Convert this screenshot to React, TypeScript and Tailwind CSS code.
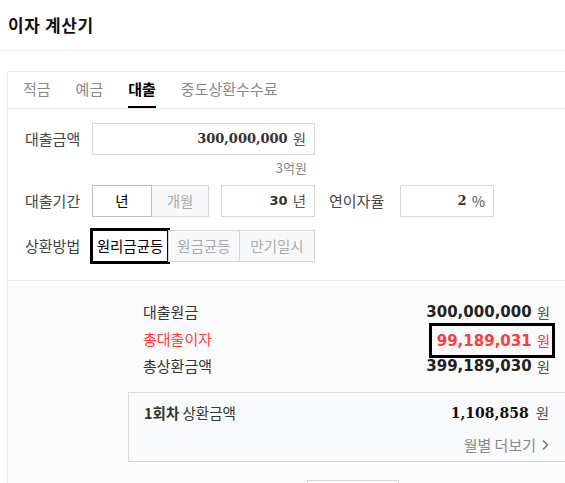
import type { ReactNode } from 'react'

const KR = "font-['Noto_Sans_CJK_KR','Noto_Sans',sans-serif]"
const SERIF_NUM = "font-['DejaVu_Serif','Noto_Sans_CJK_KR',serif]"
const SANS_NUM = "font-['DejaVu_Sans','Noto_Sans_CJK_KR',sans-serif]"

const TABS = ['적금', '예금', '대출', '중도상환수수료']

function NumberBox({ value, unit, width, numFont }: { value: string; unit: string; width: string; numFont: string }) {
  return (
    <div className={`${width} h-8 border border-[#d6d6d6] bg-white flex items-center justify-end pr-2 gap-[5px]`}>
      <span className={`${numFont} font-bold text-[13px] text-[#333]`}>{value}</span>
      <span className="text-[14.5px] text-[#555]">{unit}</span>
    </div>
  )
}

function ResultRow({ label, value, red, boxed }: { label: string; value: string; red?: boolean; boxed?: boolean }) {
  return (
    <div className="flex items-center justify-between h-[27px]">
      <span className={`text-[15px] ${red ? 'text-[#ff3b3b]' : 'text-[#333]'}`}>{label}</span>
      <span
        className={`flex items-center gap-[5px] ${boxed ? 'outline-[3px] outline outline-black outline-offset-[2px] pl-[3px] pt-[2px] pb-[1px] translate-y-[1px]' : ''}`}
      >
        <span className={`${SANS_NUM} font-bold text-[15px] ${red ? 'text-[#ff3b3b]' : 'text-[#222]'}`}>{value}</span>
        <span className={`text-[14.5px] ${red ? 'text-[#ff3b3b]' : 'text-[#555]'}`}>원</span>
      </span>
    </div>
  )
}

function Row({ label, children, className = '' }: { label: string; children: ReactNode; className?: string }) {
  return (
    <div className={`flex items-center ${className}`}>
      <span className="w-[67px] text-[15px] text-[#444]">{label}</span>
      {children}
    </div>
  )
}

export default function App() {
  return (
    <div className={`${KR} w-[565px] h-[483px] overflow-hidden bg-white`}>
      {/* Header */}
      <div className="h-[51px] border-b border-[#eeeeee] flex items-center pl-2">
        <h1 className="text-[17px] font-bold text-[#111] tracking-[0.6px]">이자 계산기</h1>
      </div>

      {/* Panel */}
      <div className="mt-5 ml-[7px] mr-[-30px] border border-[#ebebeb]">
        {/* Tabs */}
        <div className="h-[37px] border-b border-[#ebebeb] flex pl-[15px] gap-[25px]">
          {TABS.map((tab) => {
            const active = tab === '대출'
            return (
              <div
                key={tab}
                className={`h-full flex items-center text-[15px] border-b-2 ${
                  active ? 'text-black font-bold border-black' : 'text-[#888] border-transparent'
                }`}
              >
                {tab}
              </div>
            )
          })}
        </div>

        {/* Form */}
        <div className="pl-[17px] pt-[14px] pb-[18px] border-b border-[#ebebeb]">
          <Row label="대출금액">
            <NumberBox value="300,000,000" unit="원" width="w-[223px]" numFont={SERIF_NUM} />
          </Row>
          <div className="w-[282px] text-right text-[13px] text-[#888] h-[30px] leading-[26px]">3억원</div>

          <Row label="대출기간">
            <div className="flex h-8">
              <div className="w-[60px] border border-[#bdbdbd] bg-white flex items-center justify-center text-[14.5px] text-black">
                년
              </div>
              <div className="w-[57px] border border-l-0 border-[#d6d6d6] bg-[#f7f8fa] flex items-center justify-center text-[14.5px] text-[#aaa]">
                개월
              </div>
            </div>
            <div className="ml-3">
              <NumberBox value="30" unit="년" width="w-[94px]" numFont={SANS_NUM} />
            </div>
            <span className="ml-[14px] w-[71px] text-[15px] text-[#444]">연이자율</span>
            <NumberBox value="2" unit="%" width="w-[94px]" numFont={SERIF_NUM} />
          </Row>

          <Row label="상환방법" className="mt-[13px]">
            <div className="flex h-8">
              <div className="w-[76px] border-b border-[#bdbdbd] bg-white flex items-center justify-center text-[14.5px] text-black outline outline-[3px] outline-black outline-offset-[-1px]">
                원리금균등
              </div>
              <div className="w-[72px] border border-[#d6d6d6] bg-[#f7f8fa] flex items-center justify-center text-[14.5px] text-[#aaa]">
                원금균등
              </div>
              <div className="w-[75px] border border-l-0 border-[#d6d6d6] bg-[#f7f8fa] flex items-center justify-center text-[14.5px] text-[#aaa]">
                만기일시
              </div>
            </div>
          </Row>
        </div>

        {/* Results */}
        <div className="bg-[#fbfbfb] pt-[18px] pl-[135px] pr-[44px] pb-10">
          <ResultRow label="대출원금" value="300,000,000" />
          <ResultRow label="총대출이자" value="99,189,031" red boxed />
          <ResultRow label="총상환금액" value="399,189,030" />

          <div className="mt-[12px] ml-[-15px] mr-[-30px] pl-[15px] pr-[30px] h-[70px] border border-[#d9d9d9] bg-[#f9fafb] pt-[8px]">
            <div className="flex items-center justify-between h-6">
              <span className="text-[14.5px] text-[#333]">
                <span className="font-bold">1회차</span> 상환금액
              </span>
              <span className="flex items-center gap-[7px]">
                <span className={`${SERIF_NUM} font-bold text-[14px] text-[#111]`}>1,108,858</span>
                <span className="text-[14.5px] text-[#555]">원</span>
              </span>
            </div>
            <div className="flex justify-end items-center mt-[9px] gap-[5px] text-[15px] text-[#888]">
              <span>월별 더보기</span>
              <svg width="8" height="12" viewBox="0 0 8 12" fill="none" stroke="#777" strokeWidth="1.6">
                <path d="M2 1.5l4.5 4.5L2 10.5" />
              </svg>
            </div>
          </div>

          <div className="mt-[18px] ml-[164px] w-[92px] h-9 border border-[#d6d6d6] bg-white" />
        </div>
      </div>
    </div>
  )
}
